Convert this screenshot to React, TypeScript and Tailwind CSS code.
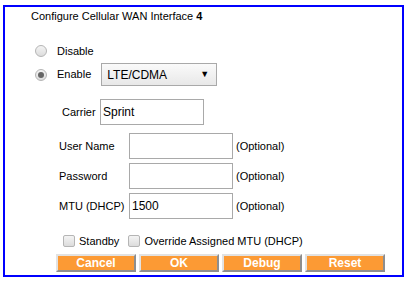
import React from "react";

const font = { fontFamily: '"Liberation Sans", Arial, sans-serif' };

function Radio({ checked }: { checked?: boolean }) {
  return (
    <span className="flex h-[12px] w-[12px] items-center justify-center rounded-full border border-[#b5b5b5] bg-gradient-to-b from-[#f4f4f4] to-[#dcdcdc]">
      {checked && <span className="h-[6px] w-[6px] rounded-full bg-[#666]" />}
    </span>
  );
}

function Check() {
  return (
    <span className="inline-block h-[12px] w-[12px] rounded-[2px] border border-[#b5b5b5] bg-gradient-to-b from-[#f4f4f4] to-[#dcdcdc] align-middle" />
  );
}

function Btn({ label }: { label: string }) {
  return (
    <div className="flex h-[18px] w-[80px] items-center justify-center border-2 border-t-[#e2e2e2] border-l-[#e2e2e2] border-r-[#8e8e8e] border-b-[#8e8e8e] bg-[#fc9a34] text-[12px] font-bold text-white">
      {label}
    </div>
  );
}

function Field({ label, value, labelW }: { label: string; value?: string; labelW: number }) {
  return (
    <div className="flex items-center">
      <span className="text-[11px] text-black" style={{ width: labelW }}>{label}</span>
      <div className="flex h-[26px] w-[104px] items-center border border-[#a9a9a9] bg-white pl-[2px] text-[12px] text-black">
        {value}
      </div>
      <span className="ml-[3px] text-[11px] text-black">(Optional)</span>
    </div>
  );
}

export default function App() {
  return (
    <div className="h-[282px] w-[411px] bg-white pl-[3px] pt-[5px]" style={font}>
      <div className="h-[272px] w-[401px] border-2 border-[#0000ff]">
        <div className="ml-[26px] mt-[3px] text-[11px] leading-[13px] text-black">
          Configure Cellular WAN Interface <b>4</b>
        </div>
        <div className="ml-[30px] mt-[21px] flex h-[14px] items-center">
          <Radio />
          <span className="ml-[10px] text-[11px] text-black">Disable</span>
        </div>
        <div className="ml-[30px] mt-[5px] flex items-center">
          <Radio checked />
          <span className="ml-[10px] text-[11px] text-black">Enable</span>
          <div className="ml-[10px] flex h-[23px] w-[116px] items-center justify-between border border-[#a9a9a9] bg-gradient-to-b from-[#fafafa] to-[#e8e8e8] pl-[5px] pr-[7px] text-[12px] text-black">
            <span>LTE/CDMA</span>
            <span className="text-[9px]">▼</span>
          </div>
        </div>
        <div className="ml-[57px] mt-[13px] flex items-center">
          <span className="w-[38px] text-[11px] text-black">Carrier</span>
          <div className="flex h-[26px] w-[104px] items-center border border-[#a9a9a9] bg-white pl-[2px] text-[12px] text-black">
            Sprint
          </div>
        </div>
        <div className="ml-[54px] mt-[8px] flex flex-col gap-[4px]">
          <Field label="User Name" labelW={70} />
          <Field label="Password" labelW={70} />
          <Field label="MTU (DHCP)" labelW={70} value="1500" />
        </div>
        <div className="ml-[58px] mt-[14px] flex items-center text-[11px] text-black">
          <Check />
          <span className="ml-[4px]">Standby</span>
          <span className="ml-[9px] flex"><Check /></span>
          <span className="ml-[4px]">Override Assigned MTU (DHCP)</span>
        </div>
        <div className="ml-[51px] mt-[4px] flex gap-[3px]">
          <Btn label="Cancel" />
          <Btn label="OK" />
          <Btn label="Debug" />
          <Btn label="Reset" />
        </div>
      </div>
    </div>
  );
}
